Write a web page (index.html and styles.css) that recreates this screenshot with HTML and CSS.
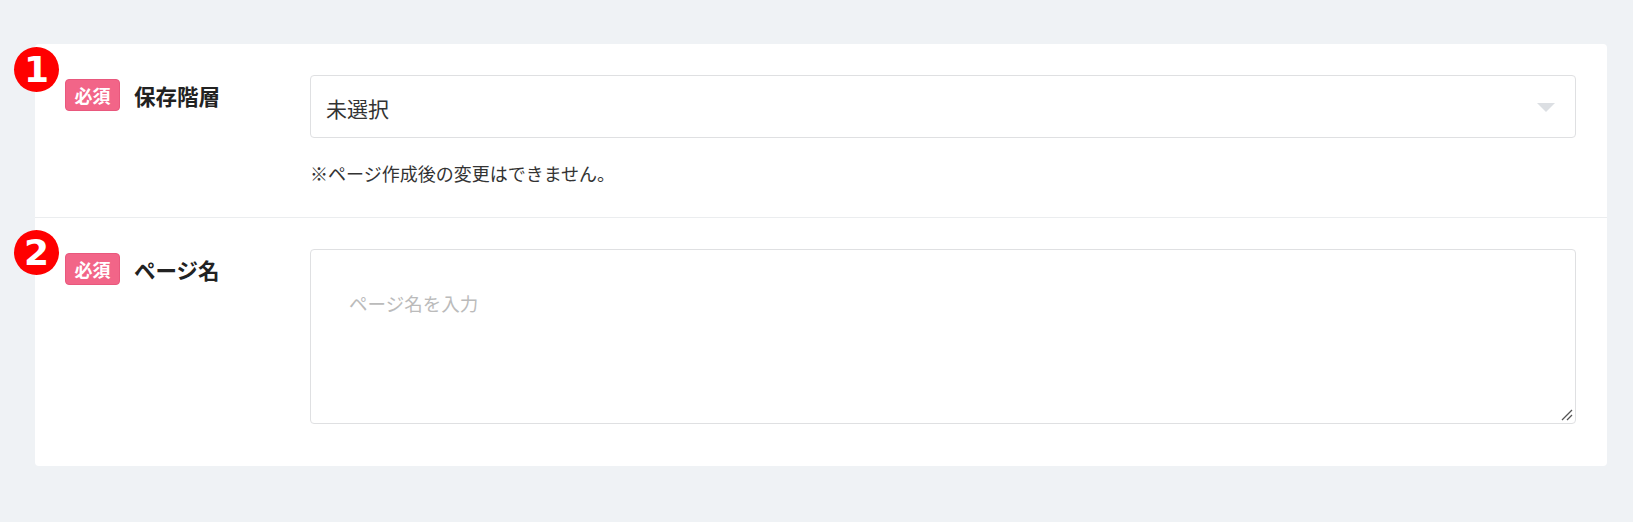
FILE: index.html
```html
<!DOCTYPE html>
<html lang="ja">
<head>
    <meta charset="UTF-8">
    <title>ページ作成</title>
    <link rel="stylesheet" href="styles.css">
</head>
<body>
    <div id="form">
        <div class="row">
            <span class="marker marker-1">1</span>
            <div class="label">
                <span class="required">必須</span>
                <span class="name">保存階層</span>
            </div>
            <div class="field">
                <div class="select">
                    <span>未選択</span>
                    <i class="arrow"></i>
                </div>
                <p class="note">※ページ作成後の変更はできません。</p>
            </div>
        </div>
        <div class="row row-last">
            <span class="marker marker-2">2</span>
            <div class="label">
                <span class="required">必須</span>
                <span class="name">ページ名</span>
            </div>
            <div class="field">
                <div class="textarea">
                    <span class="placeholder">ページ名を入力</span>
                    <svg class="grip" width="12" height="12" viewBox="0 0 12 12">
                        <path d="M1 11 L11 1 M6 11 L11 6" stroke="#555" stroke-width="1.3" fill="none"/>
                    </svg>
                </div>
            </div>
        </div>
    </div>
</body>
</html>
```

FILE: styles.css
```css
*{
    margin: 0;
    padding: 0;
    box-sizing: border-box;
}
body{
    background: #eff2f5;
    font-family: "Noto Sans CJK JP", "Noto Sans", sans-serif;
    color: #333;
}
#form{
    margin: 44px 26px 0 35px;
    background: #ffffff;
    border-radius: 4px;
}
.row{
    display: flex;
    position: relative;
    padding: 31px 31px 31px 30px;
    border-bottom: 1px solid #ebedef;
}
.row-last{
    border-bottom: none;
    padding-bottom: 42px;
}
.marker{
    position: absolute;
    left: -21px;
    width: 45px;
    height: 45px;
    border-radius: 50%;
    background: #ff0000;
    color: #ffffff;
    font-family: "DejaVu Sans", sans-serif;
    font-weight: bold;
    font-size: 36px;
    line-height: 45px;
    text-align: center;
}
.marker-1{
    top: 3px;
}
.marker-2{
    top: 12px;
}
.label{
    width: 245px;
    flex-shrink: 0;
    display: flex;
    align-items: center;
    align-self: flex-start;
    gap: 14px;
    margin-top: 4px;
}
.required{
    width: 55px;
    height: 32px;
    background: #f26588;
    border: 1px solid #e9587d;
    border-radius: 4px;
    color: #ffffff;
    font-size: 18px;
    font-weight: bold;
    display: flex;
    align-items: center;
    justify-content: center;
}
.name{
    font-size: 21.5px;
    font-weight: bold;
    color: #222;
}
.field{
    flex: 1;
}
.select{
    position: relative;
    height: 63px;
    border: 1px solid #dfe0e2;
    border-radius: 4px;
    padding: 2px 15px 0;
    display: flex;
    align-items: center;
    font-size: 21px;
    color: #333;
}
.arrow{
    position: absolute;
    right: 20px;
    top: 27px;
    width: 0;
    height: 0;
    border-left: 9px solid transparent;
    border-right: 9px solid transparent;
    border-top: 9px solid #dcdfe3;
}
.note{
    margin-top: 22px;
    font-size: 18px;
    line-height: 26px;
    color: #333;
}
.textarea{
    position: relative;
    height: 175px;
    border: 1px solid #dfe0e2;
    border-radius: 4px;
    padding: 40px 38px;
    font-size: 18.5px;
    line-height: 27px;
}
.placeholder{
    color: #bbbbbb;
}
.grip{
    position: absolute;
    right: 2px;
    bottom: 2px;
}
```
